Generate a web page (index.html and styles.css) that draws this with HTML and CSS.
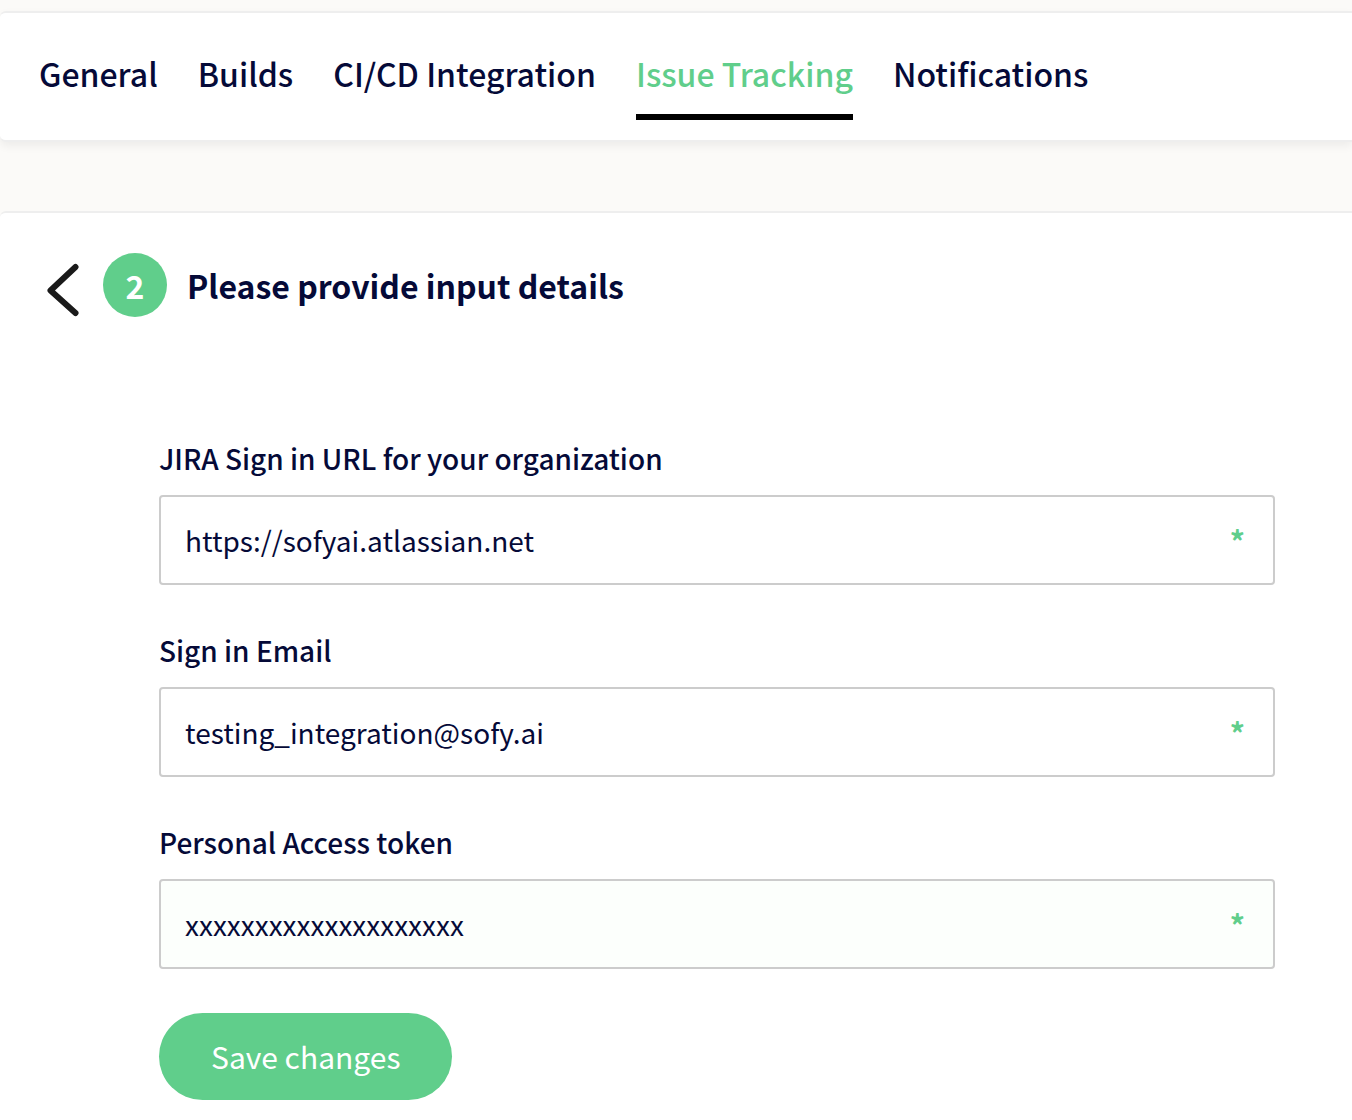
FILE: index.html
```html
<!DOCTYPE html>
<html lang="en">
<head>
<meta charset="utf-8">
<meta name="viewport" content="width=device-width, initial-scale=1">
<title>Issue Tracking</title>
<link rel="stylesheet" href="styles.css">
</head>
<body>
<nav class="tabs" aria-label="Settings">
  <a class="tab" href="#general">General</a>
  <a class="tab" href="#builds">Builds</a>
  <a class="tab" href="#cicd">CI/CD Integration</a>
  <a class="tab tab-active" href="#issues" aria-current="page">Issue Tracking</a>
  <a class="tab" href="#notifications">Notifications</a>
</nav>
<main class="panel">
  <header class="step">
    <button class="back" type="button" aria-label="Back">
      <svg width="34" height="56" viewBox="0 0 34 56" fill="none" stroke="#1a1a1a" stroke-width="6" stroke-linecap="round" stroke-linejoin="round"><path d="M29.500 6 4.500 29.500 29.500 52"/></svg>
    </button>
    <span class="step-number">2</span>
    <h1 class="step-title">Please provide input details</h1>
  </header>
  <form class="form">
    <div class="field">
      <label class="label" for="url">JIRA Sign in URL for your organization</label>
      <div class="box">
        <input class="input" id="url" type="text" value="https://sofyai.atlassian.net" required>
        <span class="required">*</span>
      </div>
    </div>
    <div class="field">
      <label class="label" for="email">Sign in Email</label>
      <div class="box">
        <input class="input" id="email" type="text" value="testing_integration@sofy.ai" required>
        <span class="required">*</span>
      </div>
    </div>
    <div class="field">
      <label class="label" for="token">Personal Access token</label>
      <div class="box box-tinted">
        <input class="input" id="token" type="text" value="xxxxxxxxxxxxxxxxxxxx" required>
        <span class="required">*</span>
      </div>
    </div>
    <button class="save" type="submit">Save changes</button>
  </form>
</main>
</body>
</html>
```
FILE: styles.css
```css
* { box-sizing: border-box; }

body {
  margin: 0;
  padding-top: 11px;
  background: #fbfaf8;
  color: #050a38;
  font-family: "Noto Sans CJK SC", "Noto Sans", sans-serif;
}

.tabs {
  display: flex;
  gap: 40px;
  padding: 35px 39px 20px;
  background: #fff;
  border-top: 2px solid #eee;
  border-bottom: 2px solid #eee;
  border-radius: 6px 0 0 6px;
  box-shadow: 0 4px 10px rgba(0, 0, 0, 0.06);
}

.tab {
  height: 72px;
  color: inherit;
  font-size: 32px;
  font-weight: 500;
  line-height: 50px;
  text-decoration: none;
}

.tab-active {
  color: #60ce8b;
  border-bottom: 6px solid #000;
}

.panel {
  min-height: 909px;
  margin-top: 69px;
  padding: 40px 77px 20px 46px;
  background: #fff;
  border-top: 2px solid #eee;
  border-radius: 6px 0 0 0;
}

.step {
  display: flex;
  align-items: center;
}

.back {
  display: flex;
  margin-right: 23px;
  padding: 8px 0 0;
  border: 0;
  background: none;
}

.step-number {
  width: 64px;
  height: 64px;
  border-radius: 50%;
  background: #60ce8b;
  color: #fff;
  font-size: 32px;
  font-weight: 700;
  line-height: 64px;
  text-align: center;
}

.step-title {
  margin: 0 0 0 20px;
  font-size: 32px;
  font-weight: 700;
  line-height: 64px;
}

.form {
  margin-top: 116px;
  padding-left: 113px;
}

.field { margin-bottom: 40px; }

.label {
  display: block;
  height: 62px;
  font-size: 28px;
  font-weight: 500;
  line-height: 50px;
}

.box {
  display: flex;
  align-items: center;
  height: 90px;
  padding: 0 28px 0 24px;
  border: 2px solid #ccc;
  border-radius: 4px;
  background: #fff;
}

.box-tinted { background: #fcfffc; }

.input {
  flex: 1;
  min-width: 0;
  padding: 0;
  border: 0;
  outline: 0;
  background: none;
  color: inherit;
  font: 400 28px/44px "Noto Sans CJK SC", "Noto Sans", sans-serif;
}

.required {
  color: #60ce8b;
  font-size: 30px;
  font-weight: 700;
  line-height: 44px;
}

.save {
  height: 87px;
  margin-top: 4px;
  padding: 0 52px 2px;
  border: 0;
  border-radius: 44px;
  background: #60ce8b;
  color: #fff;
  font: 400 30px/44px "Noto Sans CJK SC", "Noto Sans", sans-serif;
}
```
